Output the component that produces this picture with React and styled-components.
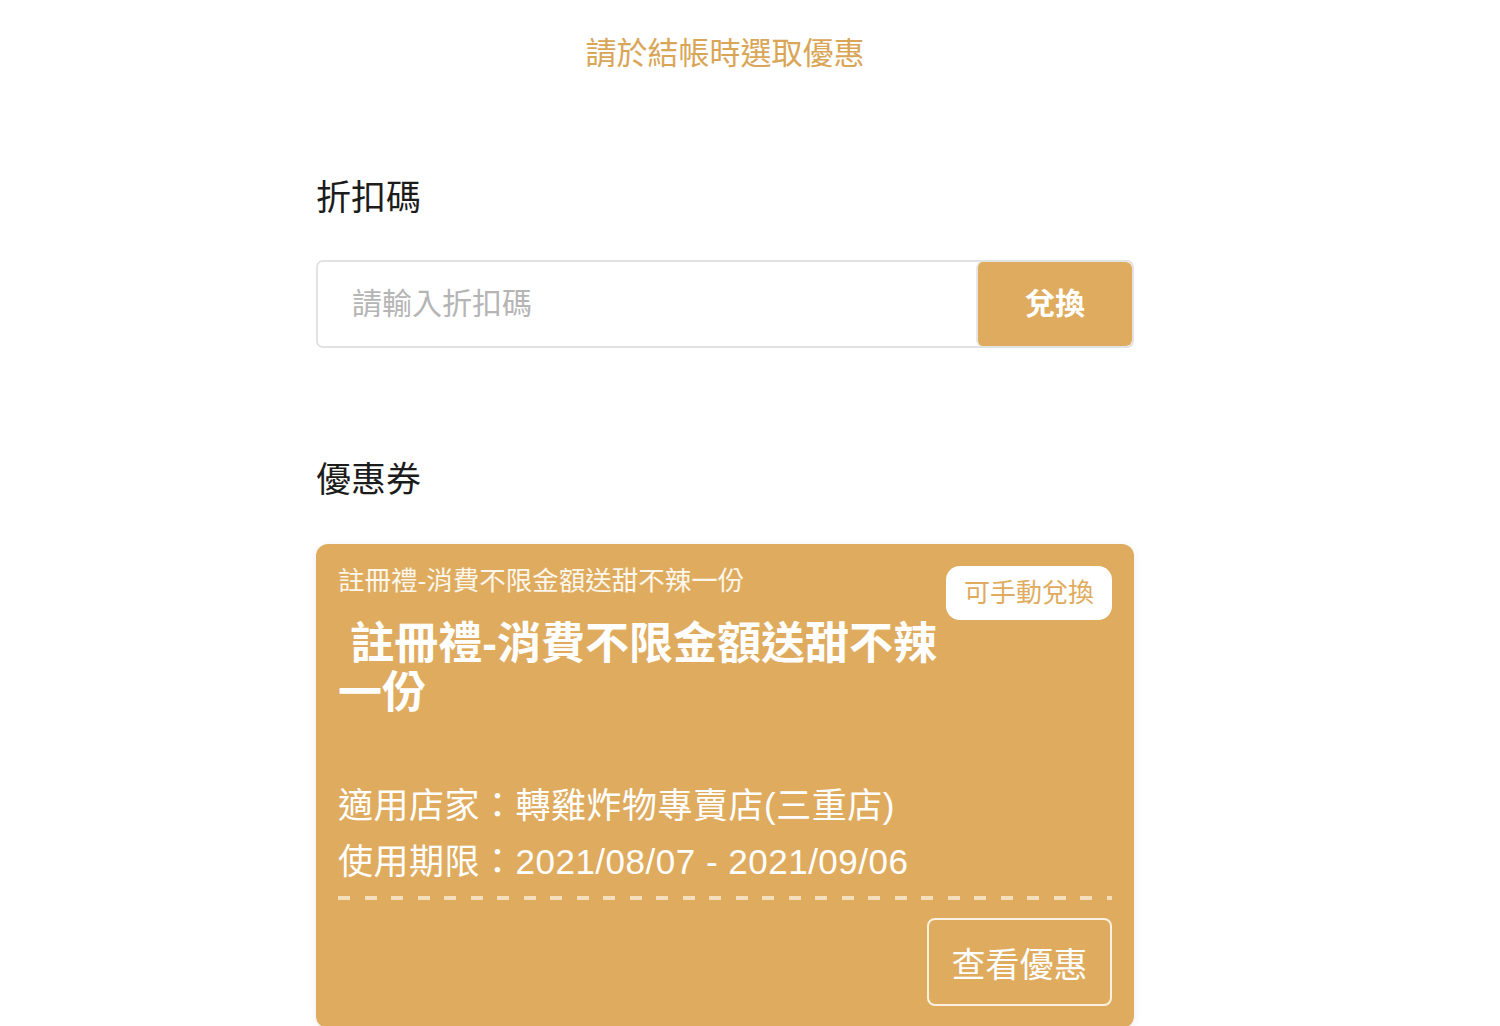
import React from "react";
import styled, { createGlobalStyle } from "styled-components";

const GOLD = "#dfac5f";

const GlobalStyle = createGlobalStyle`
  body {
    margin: 0;
    background: #fff;
    font-family: "Liberation Sans", "Noto Sans CJK TC", sans-serif;
  }
`;

const Page = styled.div`
  width: 1450px;
  padding-top: 34px;
`;

const Wrap = styled.div`
  width: 818px;
  margin: 0 auto;
`;

const Notice = styled.div`
  text-align: center;
  color: #d9a658;
  font-size: 31px;
  line-height: 40px;
`;

const SectionTitle = styled.h2`
  margin: ${(p) => p.$top}px 0 0;
  font-size: 35px;
  font-weight: 400;
  line-height: 40px;
  color: #1c1c1c;
`;

const CodeRow = styled.div`
  display: flex;
  margin-top: 42px;
  height: 88px;
  border: 2px solid #e2e2e2;
  border-radius: 7px;
  box-sizing: border-box;
  overflow: hidden;
`;

const CodeInput = styled.input`
  flex: 1;
  border: none;
  outline: none;
  padding: 0 0 0 34px;
  font-family: inherit;
  font-size: 30px;
  color: #333;
  &::placeholder {
    color: #b5b5b5;
  }
`;

const RedeemButton = styled.button`
  width: 156px;
  border: none;
  border-left: 2px solid #e6e6e6;
  background: ${GOLD};
  color: #fff;
  font-family: inherit;
  font-size: 30px;
  font-weight: 700;
  line-height: 30px;
  border-radius: 6px;
`;

const Card = styled.div`
  margin-top: 44px;
  background: ${GOLD};
  border-radius: 12px;
  box-shadow: 0 2px 8px rgba(0, 0, 0, 0.08);
  padding: 21px 22px 22px;
  color: #fff;
`;

const CardTop = styled.div`
  display: flex;
  justify-content: space-between;
  align-items: flex-start;
`;

const CardHead = styled.div`
  width: 608px;
`;

const SubTitle = styled.div`
  font-size: 26.5px;
  line-height: 32px;
  color: #fdf6ea;
`;

const BigTitle = styled.div`
  margin-top: 22px;
  font-size: 44px;
  font-weight: 700;
  line-height: 49px;
  white-space: pre-wrap;
`;

const Badge = styled.div`
  margin-top: 1px;
  background: #fff;
  color: ${GOLD};
  border-radius: 14px;
  font-size: 26px;
  line-height: 54px;
  padding: 0 18px;
`;

const InfoLine = styled.div`
  margin-top: ${(p) => p.$top}px;
  font-size: 35px;
  letter-spacing: 0.5px;
  line-height: 44px;
`;

const Dashes = styled.div`
  margin-top: 12px;
  height: 4px;
  background: repeating-linear-gradient(
    to right,
    #f3dfbb 0 12px,
    transparent 12px 26.5px
  );
`;

const Footer = styled.div`
  display: flex;
  justify-content: flex-end;
  margin-top: 18px;
`;

const ViewButton = styled.button`
  width: 185px;
  height: 88px;
  background: transparent;
  border: 2px solid #fbf1e0;
  border-radius: 8px;
  color: #fff;
  font-family: inherit;
  font-size: 34px;
`;

const App = () => (
  <>
    <GlobalStyle />
    <Page>
      <Wrap>
        <Notice>請於結帳時選取優惠</Notice>
        <SectionTitle $top={104}>折扣碼</SectionTitle>
        <CodeRow>
          <CodeInput placeholder="請輸入折扣碼" />
          <RedeemButton>兌換</RedeemButton>
        </CodeRow>
        <SectionTitle $top={112}>優惠券</SectionTitle>
        <Card>
          <CardTop>
            <CardHead>
              <SubTitle>註冊禮-消費不限金額送甜不辣一份</SubTitle>
              <BigTitle> 註冊禮-消費不限金額送甜不辣一份</BigTitle>
            </CardHead>
            <Badge>可手動兌換</Badge>
          </CardTop>
          <InfoLine $top={67}>適用店家：轉雞炸物專賣店(三重店)</InfoLine>
          <InfoLine $top={12}>使用期限：2021/08/07 - 2021/09/06</InfoLine>
          <Dashes />
          <Footer>
            <ViewButton>查看優惠</ViewButton>
          </Footer>
        </Card>
      </Wrap>
    </Page>
  </>
);

export default App;
